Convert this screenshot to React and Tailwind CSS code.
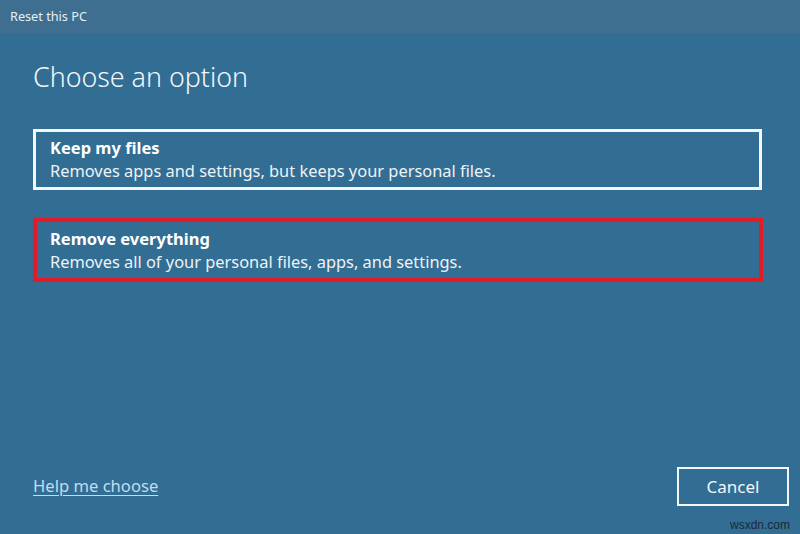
export default function App() {
  return (
    <div
      className="relative w-[800px] h-[534px] bg-[#326d93] text-white flex flex-col overflow-hidden"
      style={{ fontFamily: '"Noto Sans", "Open Sans", sans-serif' }}
    >
      {/* Title bar */}
      <div className="h-[33px] bg-[#3e6f90] flex items-center px-[10px] text-[12.7px] text-[#e6eef4] shrink-0">
        Reset this PC
      </div>

      <div className="flex-1 flex flex-col pl-[33px] pr-[11px] pt-[26px]">
        <h1 className="text-[26.8px] font-light leading-[36px] text-[#f2f6f9]">Choose an option</h1>

        <div className="mt-[34px] w-[729px] h-[61px] border-[3px] border-[#f4f7f9] px-[14px] flex flex-col justify-center">
          <div className="text-[16.5px] font-bold leading-[22px]">Keep my files</div>
          <div className="text-[16.4px] leading-[23px] text-[#eef3f7]">Removes apps and settings, but keeps your personal files.</div>
        </div>

        <div className="mt-[28px] w-[730px] h-[64px] border-[4px] border-[#e21b25] px-[13px] flex flex-col justify-center">
          <div className="text-[16.5px] font-bold leading-[22px]">Remove everything</div>
          <div className="text-[16.4px] leading-[23px] text-[#eef3f7]">Removes all of your personal files, apps, and settings.</div>
        </div>

        <div className="flex-1" />

        <div className="flex items-center justify-between pb-[28px]">
          <a className="text-[16.6px] underline underline-offset-[3px] text-[#c2dcec] cursor-pointer">Help me choose</a>
          <button className="w-[112px] h-[39px] border-[2px] border-[#f4f7f9] text-[17px] text-[#f2f6f9] flex items-center justify-center">
            Cancel
          </button>
        </div>
      </div>
      <div className="absolute left-[730px] top-[516px] text-[12px] text-[#1a2a36]" style={{ fontFamily: '"Liberation Sans", sans-serif' }}>
        wsxdn.com
      </div>
    </div>
  );
}
